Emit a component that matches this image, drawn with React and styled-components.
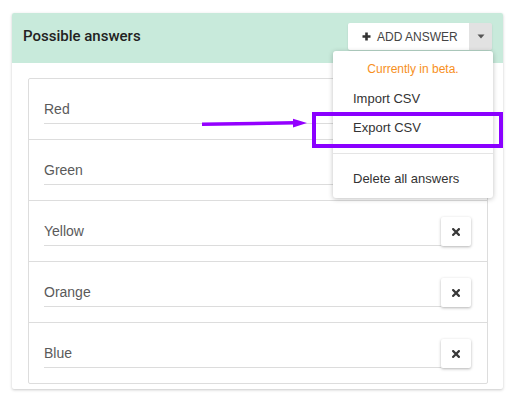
import React from "react";
import styled, { createGlobalStyle } from "styled-components";

const Global = createGlobalStyle`
  html, body { margin: 0; padding: 0; background: #ffffff; }
  body { font-family: "Liberation Sans", Arial, sans-serif; }
  * { box-sizing: border-box; }
`;

const Page = styled.div`
  position: relative;
  width: 516px;
  height: 403px;
  padding: 13px 13px 0 12px;
  background: #fff;
`;

const Card = styled.div`
  background: #fff;
  border-radius: 2px;
  box-shadow: 0 1px 3px rgba(0, 0, 0, 0.22);
  width: 491px;
`;

const Header = styled.div`
  height: 50px;
  background: #c8eadb;
  border-radius: 2px 2px 0 0;
  display: flex;
  align-items: center;
  justify-content: space-between;
  padding: 0 11px 0 11px;
`;

const Title = styled.h3`
  margin: 0;
  margin-top: -4px;
  font-family: "Roboto", "Liberation Sans", sans-serif;
  font-weight: 500;
  font-size: 15px;
  color: #222;
`;

const ButtonGroup = styled.div`
  position: relative;
  display: flex;
  height: 27px;
  margin-top: -3px;
  box-shadow: 0 1px 2px rgba(0, 0, 0, 0.12);
  border-radius: 2px;
`;

const AddButton = styled.button`
  display: flex;
  align-items: center;
  gap: 6px;
  width: 121px;
  height: 27px;
  padding: 0 0 0 14px;
  border: none;
  background: #fff;
  border-radius: 2px 0 0 2px;
  font-family: "Liberation Sans", Arial, sans-serif;
  font-size: 12px;
  color: #444;
  text-transform: uppercase;
  cursor: pointer;
`;

const CaretButton = styled.button`
  display: flex;
  align-items: center;
  justify-content: center;
  width: 23px;
  height: 27px;
  padding: 0;
  border: none;
  background: #e2e2e2;
  border-radius: 0 2px 2px 0;
  cursor: pointer;
`;

const Menu = styled.div`
  position: absolute;
  top: calc(100% + 1px);
  right: -1px;
  width: 160px;
  background: #fff;
  border-radius: 3px;
  box-shadow: 0 1px 5px rgba(0, 0, 0, 0.25);
  padding: 4px 0 5px;
  z-index: 2;
`;

const MenuNote = styled.div`
  height: 29px;
  line-height: 29px;
  text-align: center;
  font-size: 12px;
  color: #f7901e;
`;

const MenuItem = styled.div`
  height: 29px;
  line-height: 29px;
  padding: 0 20px;
  font-size: 13px;
  color: #333;
`;

const MenuDivider = styled.div`
  height: 1px;
  background: #e5e5e5;
  margin: 11px 0 10px;
`;

const Body = styled.div`
  padding: 15px 15px 5px 16px;
`;

const List = styled.div`
  border: 1px solid #dddddd;
  border-radius: 2px;
`;

const Row = styled.div`
  display: flex;
  align-items: flex-end;
  height: ${(p) => (p.$first ? "60px" : "61px")};
  padding: 0 16px 15px 15px;
  border-top: ${(p) => (p.$first ? "none" : "1px solid #dddddd")};
`;

const AnswerInput = styled.input`
  flex: 1;
  height: 29px;
  border: none;
  border-bottom: 1px solid #dcdcdc;
  padding: 0;
  font-family: "Liberation Sans", Arial, sans-serif;
  font-size: 14px;
  color: #5a5a5a;
  background: transparent;
  outline: none;
`;

const RemoveButton = styled.button`
  display: flex;
  align-items: center;
  justify-content: center;
  width: 30px;
  height: 29px;
  padding: 0;
  border: none;
  border-radius: 2px;
  background: #fff;
  box-shadow: 0 1px 3px rgba(0, 0, 0, 0.3);
  cursor: pointer;
`;

const Highlight = styled.div`
  position: absolute;
  left: 312px;
  top: 112px;
  width: 191px;
  height: 36px;
  border: 4px solid #8a00ff;
  pointer-events: none;
  z-index: 3;
`;

const ArrowSvg = styled.svg`
  position: absolute;
  left: 0;
  top: 0;
  pointer-events: none;
  z-index: 3;
`;

const PlusIcon = () => (
  <svg width="9" height="9" viewBox="0 0 9 9">
    <path d="M4.5 0.5 V8.5 M0.5 4.5 H8.5" stroke="#333" strokeWidth="2.6" />
  </svg>
);

const CaretIcon = () => (
  <svg width="8" height="5" viewBox="0 0 8 5">
    <path d="M0.5 0.5 H7.5 L4 4.5 Z" fill="#555" />
  </svg>
);

const TimesIcon = () => (
  <svg width="8" height="8" viewBox="0 0 8 8">
    <path d="M1.1 1.1 L6.9 6.9 M6.9 1.1 L1.1 6.9" stroke="#383838" strokeWidth="2.2" strokeLinecap="square" />
  </svg>
);

const answers = ["Red", "Green", "Yellow", "Orange", "Blue"];

export default function App() {
  return (
    <>
      <Global />
      <Page>
        <Card>
          <Header>
            <Title>Possible answers</Title>
            <ButtonGroup>
              <AddButton>
                <PlusIcon />
                Add answer
              </AddButton>
              <CaretButton>
                <CaretIcon />
              </CaretButton>
              <Menu>
                <MenuNote>Currently in beta.</MenuNote>
                <MenuItem>Import CSV</MenuItem>
                <MenuItem>Export CSV</MenuItem>
                <MenuDivider />
                <MenuItem>Delete all answers</MenuItem>
              </Menu>
            </ButtonGroup>
          </Header>
          <Body>
            <List>
              {answers.map((a, i) => (
                <Row key={a} $first={i === 0}>
                  <AnswerInput defaultValue={a} readOnly />
                  <RemoveButton>
                    <TimesIcon />
                  </RemoveButton>
                </Row>
              ))}
            </List>
          </Body>
        </Card>
        <Highlight />
        <ArrowSvg width="516" height="403" viewBox="0 0 516 403">
          <path d="M202 124.3 L295 122.8" stroke="#9400ff" strokeWidth="3.6" />
          <polygon points="293,118.8 307,123 293,127.6" fill="#9400ff" />
        </ArrowSvg>
      </Page>
    </>
  );
}
